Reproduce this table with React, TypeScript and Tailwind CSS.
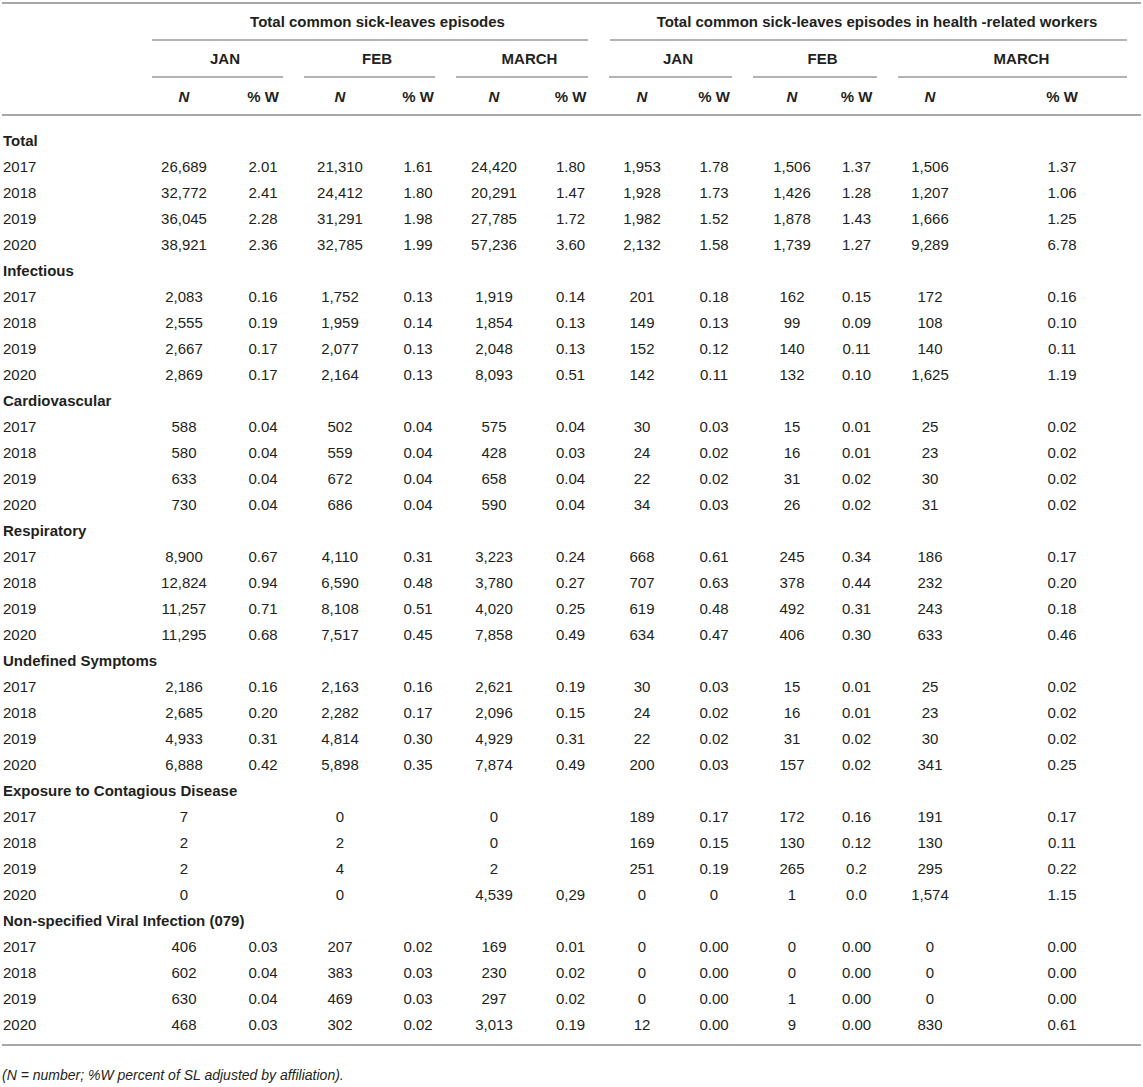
import React from 'react';

// widths: label, then JAN/FEB/MARCH (N, %W) for both groups
const COLS =
  'grid grid-cols-[140px_84px_68px_92px_60px_96px_57px_86px_58px_82px_63px_84px_1fr]';

// nudge each data column so its centre lines up with the reference
const CELL = [
  'text-center',
  'text-center pl-[6px]',
  'text-center',
  'text-center pl-[4px]',
  'text-center',
  'text-center',
  'text-center',
  'text-center',
  'text-center pl-[16px]',
  'text-center',
  'text-center',
  'text-center pl-[11px]',
];

type Row = [string, ...string[]];

const sections: { title: string; rows: Row[] }[] = [
  {
    title: 'Total',
    rows: [
      ['2017', '26,689', '2.01', '21,310', '1.61', '24,420', '1.80', '1,953', '1.78', '1,506', '1.37', '1,506', '1.37'],
      ['2018', '32,772', '2.41', '24,412', '1.80', '20,291', '1.47', '1,928', '1.73', '1,426', '1.28', '1,207', '1.06'],
      ['2019', '36,045', '2.28', '31,291', '1.98', '27,785', '1.72', '1,982', '1.52', '1,878', '1.43', '1,666', '1.25'],
      ['2020', '38,921', '2.36', '32,785', '1.99', '57,236', '3.60', '2,132', '1.58', '1,739', '1.27', '9,289', '6.78'],
    ],
  },
  {
    title: 'Infectious',
    rows: [
      ['2017', '2,083', '0.16', '1,752', '0.13', '1,919', '0.14', '201', '0.18', '162', '0.15', '172', '0.16'],
      ['2018', '2,555', '0.19', '1,959', '0.14', '1,854', '0.13', '149', '0.13', '99', '0.09', '108', '0.10'],
      ['2019', '2,667', '0.17', '2,077', '0.13', '2,048', '0.13', '152', '0.12', '140', '0.11', '140', '0.11'],
      ['2020', '2,869', '0.17', '2,164', '0.13', '8,093', '0.51', '142', '0.11', '132', '0.10', '1,625', '1.19'],
    ],
  },
  {
    title: 'Cardiovascular',
    rows: [
      ['2017', '588', '0.04', '502', '0.04', '575', '0.04', '30', '0.03', '15', '0.01', '25', '0.02'],
      ['2018', '580', '0.04', '559', '0.04', '428', '0.03', '24', '0.02', '16', '0.01', '23', '0.02'],
      ['2019', '633', '0.04', '672', '0.04', '658', '0.04', '22', '0.02', '31', '0.02', '30', '0.02'],
      ['2020', '730', '0.04', '686', '0.04', '590', '0.04', '34', '0.03', '26', '0.02', '31', '0.02'],
    ],
  },
  {
    title: 'Respiratory',
    rows: [
      ['2017', '8,900', '0.67', '4,110', '0.31', '3,223', '0.24', '668', '0.61', '245', '0.34', '186', '0.17'],
      ['2018', '12,824', '0.94', '6,590', '0.48', '3,780', '0.27', '707', '0.63', '378', '0.44', '232', '0.20'],
      ['2019', '11,257', '0.71', '8,108', '0.51', '4,020', '0.25', '619', '0.48', '492', '0.31', '243', '0.18'],
      ['2020', '11,295', '0.68', '7,517', '0.45', '7,858', '0.49', '634', '0.47', '406', '0.30', '633', '0.46'],
    ],
  },
  {
    title: 'Undefined Symptoms',
    rows: [
      ['2017', '2,186', '0.16', '2,163', '0.16', '2,621', '0.19', '30', '0.03', '15', '0.01', '25', '0.02'],
      ['2018', '2,685', '0.20', '2,282', '0.17', '2,096', '0.15', '24', '0.02', '16', '0.01', '23', '0.02'],
      ['2019', '4,933', '0.31', '4,814', '0.30', '4,929', '0.31', '22', '0.02', '31', '0.02', '30', '0.02'],
      ['2020', '6,888', '0.42', '5,898', '0.35', '7,874', '0.49', '200', '0.03', '157', '0.02', '341', '0.25'],
    ],
  },
  {
    title: 'Exposure to Contagious Disease',
    rows: [
      ['2017', '7', '', '0', '', '0', '', '189', '0.17', '172', '0.16', '191', '0.17'],
      ['2018', '2', '', '2', '', '0', '', '169', '0.15', '130', '0.12', '130', '0.11'],
      ['2019', '2', '', '4', '', '2', '', '251', '0.19', '265', '0.2', '295', '0.22'],
      ['2020', '0', '', '0', '', '4,539', '0,29', '0', '0', '1', '0.0', '1,574', '1.15'],
    ],
  },
  {
    title: 'Non-specified Viral Infection (079)',
    rows: [
      ['2017', '406', '0.03', '207', '0.02', '169', '0.01', '0', '0.00', '0', '0.00', '0', '0.00'],
      ['2018', '602', '0.04', '383', '0.03', '230', '0.02', '0', '0.00', '0', '0.00', '0', '0.00'],
      ['2019', '630', '0.04', '469', '0.03', '297', '0.02', '0', '0.00', '1', '0.00', '0', '0.00'],
      ['2020', '468', '0.03', '302', '0.02', '3,013', '0.19', '12', '0.00', '9', '0.00', '830', '0.61'],
    ],
  },
];

const months = ['JAN', 'FEB', 'MARCH', 'JAN', 'FEB', 'MARCH'];

const Underlined = ({ label, last }: { label: string; last?: boolean }) => (
  <div className="col-span-2 flex flex-col">
    <div className="h-[35px] flex items-center justify-center pl-[14px] font-bold">{label}</div>
    <div className={`h-[2px] bg-[#b3b3b3] ml-[10px] ${last ? 'mr-[14px]' : 'mr-[11px]'}`} />
  </div>
);

export default function App() {
  return (
    <div
      className="bg-white text-[#231f20] text-[15px] leading-none"
      style={{ fontFamily: '"Liberation Sans", Arial, sans-serif' }}
    >
      <div className="ml-[2px] w-[1139px] pt-[2px]">
        <div className="border-t-2 border-[#a8a8a8]">
          {/* group headings */}
          <div className={COLS}>
            <div />
            <div className="col-span-6 flex flex-col">
              <div className="h-[35px] flex items-center justify-center pl-[14px] font-bold">
                Total common sick-leaves episodes
              </div>
              <div className="h-[2px] bg-[#b3b3b3] ml-[10px] mr-[11px]" />
            </div>
            <div className="col-span-6 flex flex-col">
              <div className="h-[35px] flex items-center justify-center pl-[14px] font-bold">
                Total common sick-leaves episodes in health -related workers
              </div>
              <div className="h-[2px] bg-[#b3b3b3] ml-[11px] mr-[14px]" />
            </div>
          </div>

          {/* months */}
          <div className={COLS}>
            <div />
            {months.map((m, i) => (
              <Underlined key={i} label={m} last={i === 5} />
            ))}
          </div>

          {/* N / %W */}
          <div className={`${COLS} h-[38px] items-center border-b-2 border-[#a8a8a8] font-bold`}>
            <div />
            {CELL.map((c, i) => (
              <div key={i} className={c}>
                {i % 2 === 0 ? <span className="italic">N</span> : '% W'}
              </div>
            ))}
          </div>
        </div>

        {/* body */}
        <div className="pt-[11px] pb-[7px] border-b-2 border-[#a8a8a8]">
          {sections.map(s => (
            <React.Fragment key={s.title}>
              <div className="h-[26px] flex items-center pl-px font-bold">{s.title}</div>
              {s.rows.map(r => (
                <div key={r[0]} className={`${COLS} h-[26px] items-center`}>
                  <div className="pl-px">{r[0]}</div>
                  {r.slice(1).map((v, i) => (
                    <div key={i} className={CELL[i]}>
                      {v}
                    </div>
                  ))}
                </div>
              ))}
            </React.Fragment>
          ))}
        </div>

        <p className="mt-[19px] h-[20px] flex items-center italic text-[14px]">
          (N = number; %W percent of SL adjusted by affiliation).
        </p>
      </div>
    </div>
  );
}
